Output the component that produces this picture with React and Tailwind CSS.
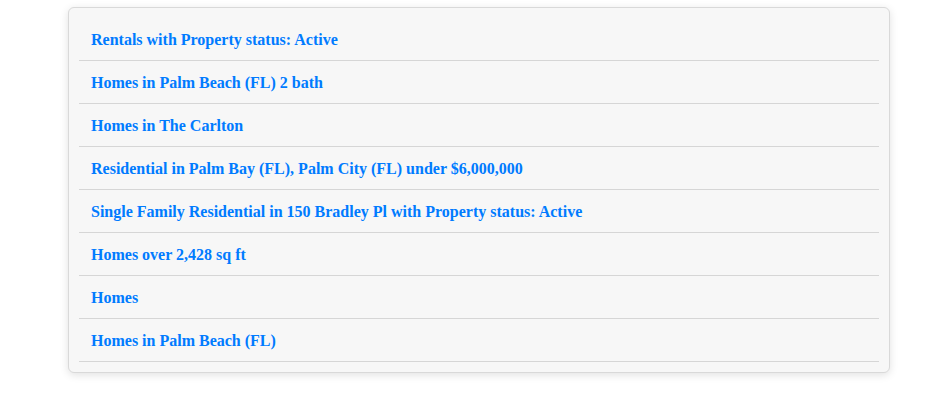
import React from 'react';

const searches = [
  'Rentals with Property status: Active',
  'Homes in Palm Beach (FL) 2 bath',
  'Homes in The Carlton',
  'Residential in Palm Bay (FL), Palm City (FL) under $6,000,000',
  'Single Family Residential in 150 Bradley Pl with Property status: Active',
  'Homes over 2,428 sq ft',
  'Homes',
  'Homes in Palm Beach (FL)',
];

const App = () => {
  return (
    <div className="min-h-[403px] bg-white pt-[7px]" style={{ fontFamily: '"Liberation Serif", "Times New Roman", serif' }}>
      <div className="ml-[68px] w-[822px] rounded-md border border-[#d9d9d9] bg-[#f7f7f7] px-[10px] pt-[10px] pb-[10px] shadow-[0_2px_8px_rgba(0,0,0,0.12)]">
        {searches.map((label) => (
          <div key={label} className="border-b border-[#d6d6d6] px-3 h-[43px] flex items-center">
            <a href="#" className="text-[16px] font-bold text-[#007bff] leading-none pt-[1px]">
              {label}
            </a>
          </div>
        ))}
      </div>
    </div>
  );
};

export default App;
